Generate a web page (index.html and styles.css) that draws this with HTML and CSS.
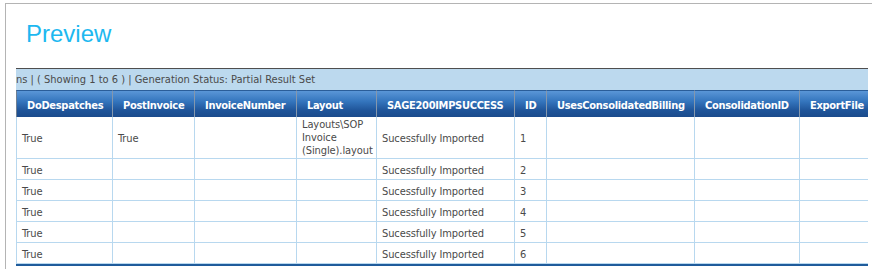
FILE: index.html
```html
<!DOCTYPE html>
<html lang="en">
<head>
<meta charset="utf-8">
<title>Preview</title>
<link rel="stylesheet" href="styles.css">
</head>
<body>
<div class="frame">
  <h1 class="title">Preview</h1>
  <div class="grid-wrap">
    <div class="toolbar">ns | ( Showing 1 to 6 ) | Generation Status: Partial Result Set</div>
    <div class="grid">
      <div class="th first">DoDespatches</div>
      <div class="th">PostInvoice</div>
      <div class="th">InvoiceNumber</div>
      <div class="th">Layout</div>
      <div class="th">SAGE200IMPSUCCESS</div>
      <div class="th">ID</div>
      <div class="th">UsesConsolidatedBilling</div>
      <div class="th">ConsolidationID</div>
      <div class="th">ExportFile</div>

      <div class="td first">True</div>
      <div class="td">True</div>
      <div class="td"></div>
      <div class="td multi">Layouts\SOP<br>Invoice<br>(Single).layout</div>
      <div class="td">Sucessfully Imported</div>
      <div class="td">1</div>
      <div class="td"></div>
      <div class="td"></div>
      <div class="td"></div>

      <div class="td first">True</div>
      <div class="td"></div>
      <div class="td"></div>
      <div class="td"></div>
      <div class="td">Sucessfully Imported</div>
      <div class="td">2</div>
      <div class="td"></div>
      <div class="td"></div>
      <div class="td"></div>

      <div class="td first">True</div>
      <div class="td"></div>
      <div class="td"></div>
      <div class="td"></div>
      <div class="td">Sucessfully Imported</div>
      <div class="td">3</div>
      <div class="td"></div>
      <div class="td"></div>
      <div class="td"></div>

      <div class="td first">True</div>
      <div class="td"></div>
      <div class="td"></div>
      <div class="td"></div>
      <div class="td">Sucessfully Imported</div>
      <div class="td">4</div>
      <div class="td"></div>
      <div class="td"></div>
      <div class="td"></div>

      <div class="td first">True</div>
      <div class="td"></div>
      <div class="td"></div>
      <div class="td"></div>
      <div class="td">Sucessfully Imported</div>
      <div class="td">5</div>
      <div class="td"></div>
      <div class="td"></div>
      <div class="td"></div>

      <div class="td first">True</div>
      <div class="td"></div>
      <div class="td"></div>
      <div class="td"></div>
      <div class="td">Sucessfully Imported</div>
      <div class="td">6</div>
      <div class="td"></div>
      <div class="td"></div>
      <div class="td"></div>
    </div>
  </div>
</div>
</body>
</html>
```

FILE: styles.css
```css
html, body {
  margin: 0;
  padding: 0;
  background: #ffffff;
}

.frame {
  margin: 3px 0 0 5px;
  border-top: 1px solid #b4b4b4;
  border-left: 1px solid #b4b4b4;
  padding: 16px 4px 3px 10px;
}

.title {
  margin: 0 0 20px 10px;
  font-family: "Liberation Sans", Arial, sans-serif;
  font-weight: normal;
  font-size: 24px;
  line-height: 28px;
  color: #1db8f0;
}

.grid-wrap {
  overflow: hidden;
  border-top: 1px solid #4f4f4f;
  font-family: "DejaVu Sans Condensed", "DejaVu Sans", sans-serif;
  font-stretch: condensed;
  font-size: 11px;
}

.toolbar {
  height: 21px;
  line-height: 21px;
  background: #bcd9ee;
  color: #4a4a4a;
  white-space: nowrap;
}

.grid {
  display: grid;
  width: 884px;
  grid-template-columns: 97px 82px 102px 80px 138px 32px 148px 105px 100px;
  grid-template-rows: 27px 42px repeat(5, 21px);
  border-bottom: 2px solid #1f5c9c;
}

.th {
  box-sizing: border-box;
  display: flex;
  align-items: center;
  padding: 3px 10px 0;
  line-height: 13px;
  color: #ffffff;
  font-weight: bold;
  letter-spacing: -0.3px;
  white-space: nowrap;
  border-top: 1px solid #2a5d99;
  border-right: 1px solid #8497ad;
  background: linear-gradient(#5a96d7 0%, #3475bd 40%, #1f5499 75%, #1b4b8c 100%);
}

.th.first {
  border-left: 1px solid #6f7f92;
}

.td {
  box-sizing: border-box;
  display: flex;
  align-items: center;
  padding: 2px 5px 0;
  line-height: 13px;
  color: #4a4a4a;
  white-space: nowrap;
  letter-spacing: -0.1px;
  border-right: 1px solid #b8d8ef;
  border-bottom: 1px solid #b8d8ef;
}

.td.first {
  border-left: 1px solid #b8d8ef;
}

.td.multi {
  display: block;
  padding-top: 1px;
}
```
